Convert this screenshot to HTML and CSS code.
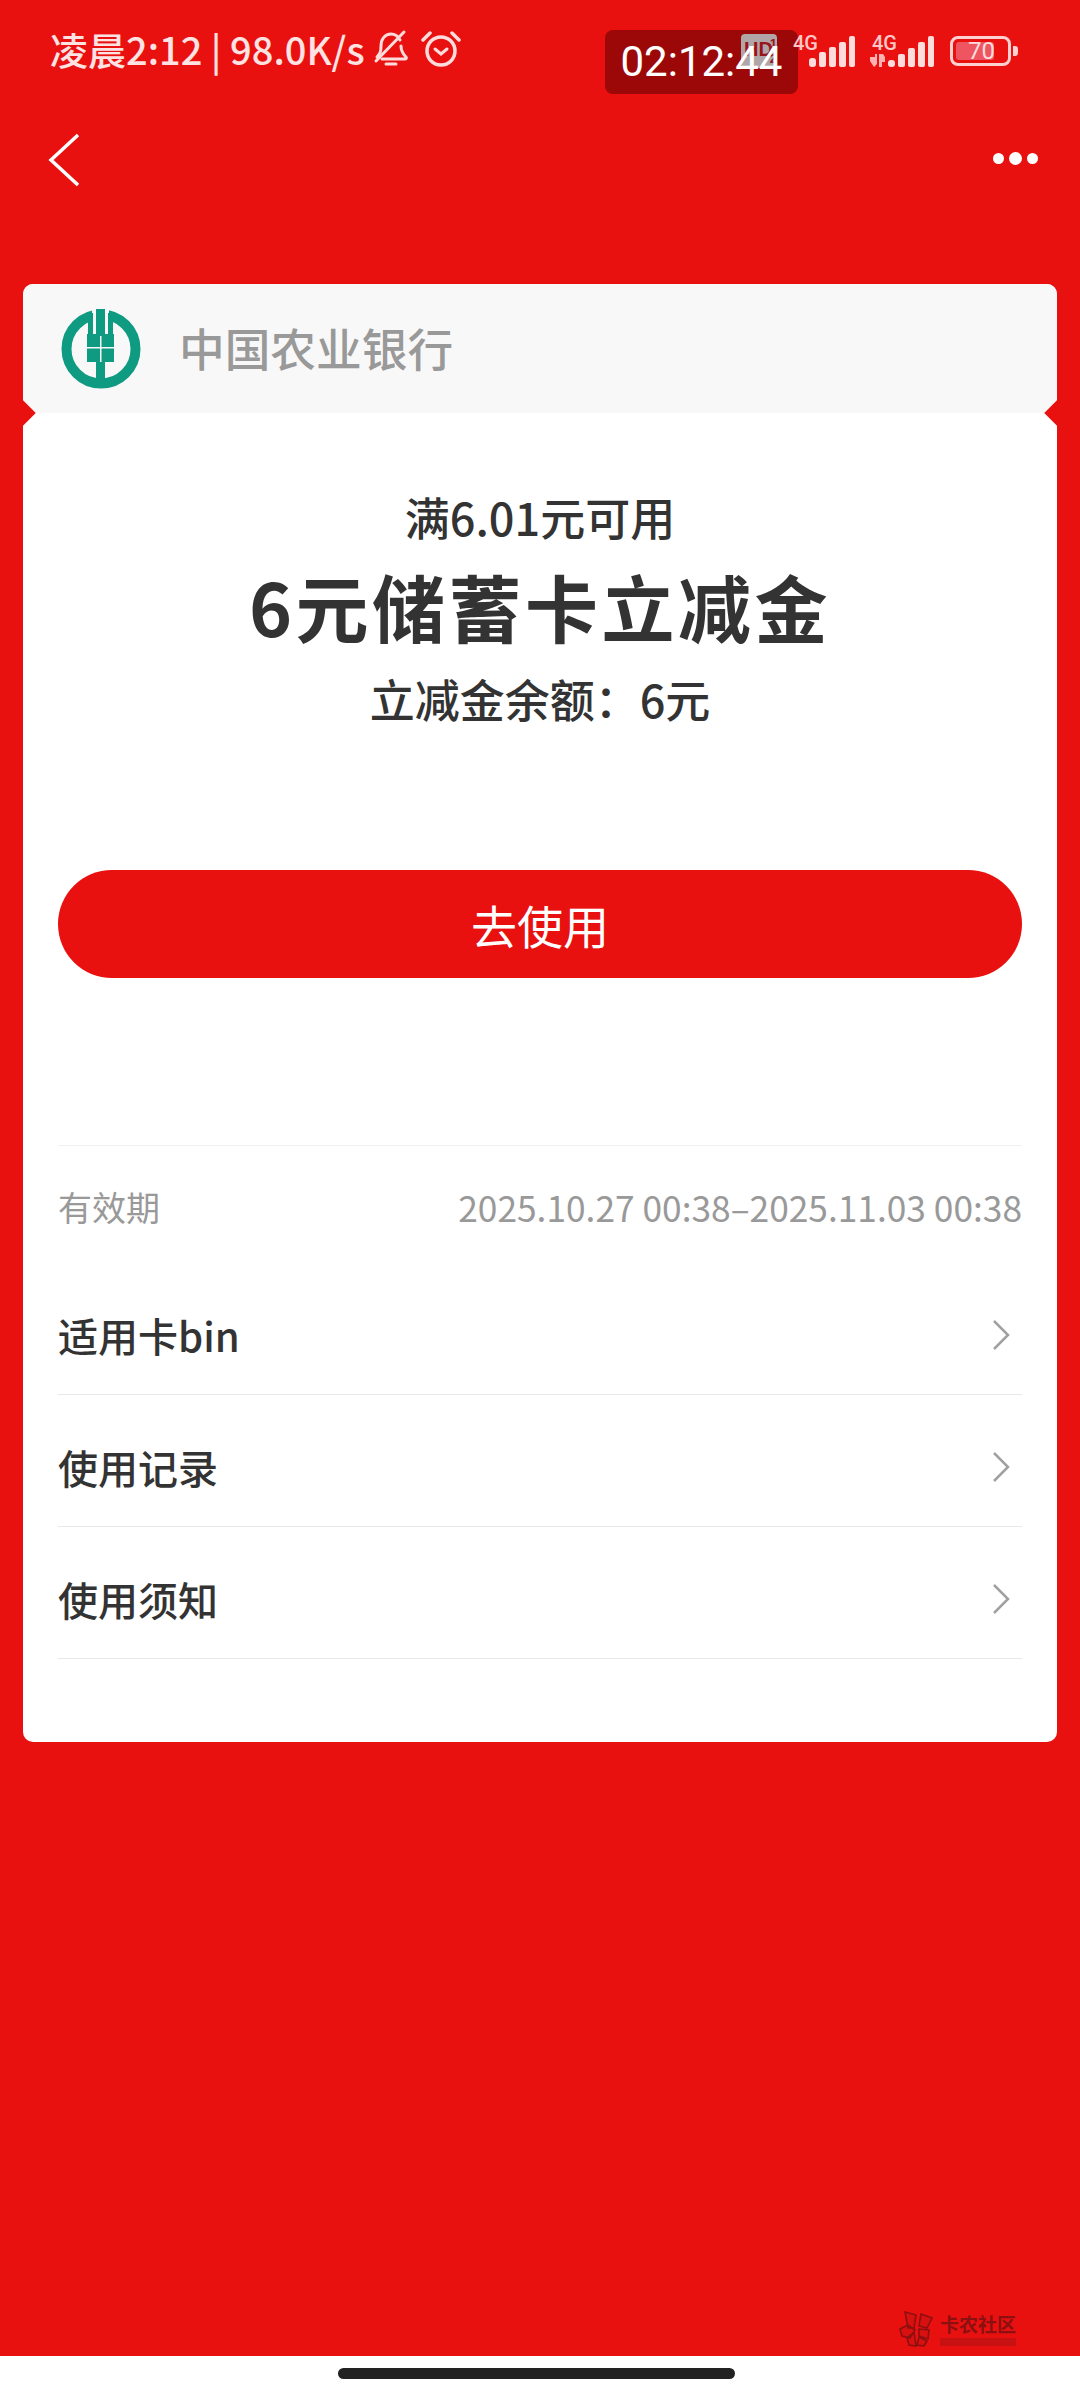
FILE: index.html
```html
<!DOCTYPE html>
<html lang="zh">
<head>
    <meta charset="UTF-8">
    <title>立减金</title>
    <link rel="stylesheet" href="styles.css">
</head>
<body>
    <div id="page">
        <div class="status">
            <div class="timer"></div>
            <div class="status-left">
                <span class="status-text">凌晨2:12 | 98.0K/s</span>
                <svg class="ico-bell" width="36" height="40" viewBox="0 0 36 40">
                    <path d="M4 28c3-3 4-5 4-11 0-7 4-12 10-12 4 0 7 2 9 6M28 17c0 5 2 8 5 11 1 1 0 2-1 2H9" fill="none" stroke="#ffdcdc" stroke-width="3" stroke-linecap="round"/>
                    <path d="M3 32L31 3" stroke="#ffdcdc" stroke-width="3" stroke-linecap="round"/>
                    <path d="M13 35h10" stroke="#ffdcdc" stroke-width="3" stroke-linecap="round"/>
                </svg>
                <svg class="ico-alarm" width="40" height="38" viewBox="0 0 40 38">
                    <circle cx="20" cy="21" r="14" fill="none" stroke="#ffdcdc" stroke-width="3.5"/>
                    <path d="M14 19l6 5 6-5" fill="none" stroke="#ffdcdc" stroke-width="3" stroke-linecap="round"/>
                    <path d="M2 10L9 3M38 10L31 3" stroke="#ffdcdc" stroke-width="3.5" stroke-linecap="round"/>
                </svg>
            </div>
            <div class="status-right">
                <div class="hd">HD<span class="hd-num">1<br>2</span></div>
                <svg class="sig" width="62" height="36" viewBox="0 0 62 36">
                    <text x="0" y="16" class="sig-label">4G</text>
                    <rect x="16" y="24" width="7" height="9" rx="3" fill="#ffdcdc"/>
                    <rect x="26" y="18" width="7" height="15" rx="2" fill="#ffdcdc"/>
                    <rect x="36" y="13" width="7" height="20" rx="2" fill="#ffdcdc"/>
                    <rect x="46" y="8" width="7" height="25" rx="2" fill="#ffdcdc"/>
                    <rect x="56" y="2" width="6" height="31" rx="2" fill="#ffdcdc"/>
                </svg>
                <svg class="sig" width="65" height="36" viewBox="0 0 65 36">
                    <text x="2" y="16" class="sig-label">4G</text>
                    <path d="M0 23h5v-3h2v10l-3 3-4-6zM9 33V20h4l2 3v5h-3v5z" fill="#ffb0b0"/>
                    <rect x="18" y="26" width="7" height="7" rx="3" fill="#ffdcdc"/>
                    <rect x="28" y="20" width="7" height="13" rx="2" fill="#ffdcdc"/>
                    <rect x="38" y="14" width="7" height="19" rx="2" fill="#ffdcdc"/>
                    <rect x="48" y="8" width="7" height="25" rx="2" fill="#ffdcdc"/>
                    <rect x="58" y="2" width="6" height="31" rx="2" fill="#ffdcdc"/>
                </svg>
                <div class="battery">
                    <div class="battery-body">
                        <div class="battery-fill"></div>
                        <span class="battery-num">70</span>
                    </div>
                    <div class="battery-nub"></div>
                </div>
            </div>
            <div class="timer-text">02:12:44</div>
        </div>

        <div class="nav">
            <svg width="32" height="54" viewBox="0 0 32 54">
                <path d="M30 2L3 27l27 25" fill="none" stroke="#fff" stroke-width="3.5"/>
            </svg>
            <div class="more">
                <i class="dot"></i><i class="dot dot-mid"></i><i class="dot"></i>
            </div>
        </div>

        <div class="card">
            <div class="card-head">
                <svg class="bank-logo" width="80" height="80" viewBox="0 0 80 80">
                    <circle cx="40" cy="40" r="34.5" fill="none" stroke="#0f9a82" stroke-width="10"/>
                    <rect x="31" y="0" width="17" height="24" fill="#f8f8f8"/>
                    <rect x="27" y="4" width="5" height="22" fill="#0f9a82"/>
                    <rect x="47" y="4" width="5" height="22" fill="#0f9a82"/>
                    <rect x="35" y="0" width="9" height="25" fill="#0f9a82"/>
                    <rect x="26" y="25" width="27" height="28" fill="#0f9a82"/>
                    <rect x="35" y="53" width="9" height="22" fill="#0f9a82"/>
                    <rect x="39" y="27" width="1.5" height="26" fill="#f8f8f8"/>
                    <rect x="26" y="38" width="27" height="1.5" fill="#f8f8f8"/>
                </svg>
                <span class="bank-name">中国农业银行</span>
            </div>
            <div class="card-body">
                <div class="hero">
                    <div class="hero-min">满6.01元可用</div>
                    <div class="hero-title">6元储蓄卡立减金</div>
                    <div class="hero-left">立减金余额：6元</div>
                </div>
                <div class="use-btn">去使用</div>
                <div class="validity">
                    <span class="validity-label">有效期</span>
                    <span class="validity-date">2025.10.27 00:38–2025.11.03 00:38</span>
                </div>
                <div class="row">
                    <span>适用卡bin</span>
                    <svg width="18" height="32" viewBox="0 0 18 32"><path d="M2 2l14 14L2 30" fill="none" stroke="#a0a0a0" stroke-width="2.5"/></svg>
                </div>
                <div class="row">
                    <span>使用记录</span>
                    <svg width="18" height="32" viewBox="0 0 18 32"><path d="M2 2l14 14L2 30" fill="none" stroke="#a0a0a0" stroke-width="2.5"/></svg>
                </div>
                <div class="row">
                    <span>使用须知</span>
                    <svg width="18" height="32" viewBox="0 0 18 32"><path d="M2 2l14 14L2 30" fill="none" stroke="#a0a0a0" stroke-width="2.5"/></svg>
                </div>
            </div>
        </div>

        <div class="watermark">
            <svg width="36" height="36" viewBox="0 0 36 36">
                <path d="M6 1l11 3-2 13-6 0zM22 3l11 4-5 10-8-2zM1 18l8-4 7 5-5 8-8-2zM20 18l10 1-1 9-9-3zM8 27l7-6 2 14-7-1zM20 26l8 4-3 5-7-1z" fill="#d81010" stroke="#8c1010" stroke-width="1.6"/>
            </svg>
            <div class="watermark-text">
                <span>卡农社区</span>
                <i class="watermark-sub"></i>
            </div>
        </div>

        <div class="home-bar"><i class="home-line"></i></div>
    </div>
</body>
</html>
```

FILE: styles.css
```css
*{
    margin: 0;
    padding: 0;
    box-sizing: border-box;
}
body{
    background: #e91010;
    font-family: "Noto Sans CJK SC", "Noto Sans", sans-serif;
}
#page{
    width: 1080px;
    height: 2400px;
    background: #e91010;
    position: relative;
    overflow: hidden;
    display: flex;
    flex-direction: column;
}

/* status bar */
.status{
    height: 100px;
    padding: 27px 0 0 50px;
    display: flex;
    justify-content: space-between;
    align-items: flex-start;
}
.status-left{
    display: flex;
    align-items: center;
    color: #ffe2e2;
}
.status-text{
    font-size: 38px;
    line-height: 44px;
    font-weight: 500;
}
.ico-bell{
    margin-left: 8px;
}
.ico-alarm{
    margin-left: 12px;
}
.status-right{
    display: flex;
    align-items: flex-start;
    padding: 7px 62px 0 0;
    position: relative;
}
.hd{
    width: 36px;
    height: 34px;
    background: #b0a6a8;
    border-radius: 4px;
    color: #99141a;
    font: bold 20px/30px "Liberation Sans", sans-serif;
    padding-left: 3px;
    position: relative;
    white-space: nowrap;
}
.hd-num{
    position: absolute;
    right: 0;
    top: 2px;
    font-size: 13px;
    line-height: 15px;
}
.sig{
    margin-left: 16px;
    overflow: visible;
}
.sig + .sig{
    margin-left: 15px;
}
.sig-label{
    font: 500 20px "Roboto", sans-serif;
    fill: #ffc8c8;
}
.battery{
    margin: 2px 0 0 15px;
    display: flex;
    align-items: center;
}
.battery-body{
    width: 61px;
    height: 30px;
    border: 3px solid #ffd0d0;
    border-radius: 8px;
    position: relative;
}
.battery-fill{
    width: 38px;
    height: 18px;
    margin: 3px 0 0 3px;
    background: #ee5560;
    border-radius: 3px;
}
.battery-num{
    position: absolute;
    left: 15px;
    top: 0;
    font: 24px/24px "Roboto", sans-serif;
    color: #ffdcdc;
}
.battery-nub{
    width: 5px;
    height: 10px;
    margin-left: 2px;
    background: #ffd0d0;
    border-radius: 0 3px 3px 0;
}
.timer,.timer-text{
    position: absolute;
    left: 605px;
    top: 30px;
    width: 193px;
    height: 64px;
}
.timer{
    background: #9c0808;
    border-radius: 8px;
}
.timer-text{
    color: #fff;
    font: 400 42px/64px "Roboto", sans-serif;
    text-align: center;
}

/* nav */
.nav{
    height: 184px;
    padding: 33px 42px 0 48px;
    display: flex;
    justify-content: space-between;
    align-items: flex-start;
}
.more{
    display: flex;
    align-items: center;
    gap: 5px;
    margin-top: 19px;
}
.dot{
    width: 11px;
    height: 11px;
    background: #fff;
    border-radius: 50%;
}
.dot-mid{
    width: 13px;
    height: 13px;
}

/* card */
.card{
    width: 1034px;
    margin-left: 23px;
    background: #fff;
    border-radius: 10px;
    position: relative;
    overflow: hidden;
}
.card:before,.card:after{
    content: "";
    position: absolute;
    top: 120px;
    width: 18px;
    height: 18px;
    background: #e91010;
    transform: rotate(45deg);
}
.card:before{
    left: -9px;
}
.card:after{
    right: -9px;
}
.card-head{
    height: 129px;
    background: #f8f8f8;
    padding-left: 38px;
    display: flex;
    align-items: center;
}
.bank-name{
    margin: 0 0 3px 38px;
    font-size: 45.7px;
    line-height: 60px;
    font-weight: 500;
    color: #999;
}
.card-body{
    padding: 0 35px 83px;
}
.hero{
    padding-top: 74px;
    text-align: center;
    color: #333;
}
.hero-min{
    font-size: 45px;
    line-height: 60px;
    font-weight: 500;
}
.hero-title{
    margin-top: 13px;
    font-size: 73px;
    line-height: 90px;
    font-weight: 700;
    letter-spacing: 3.5px;
}
.hero-left{
    margin-top: 19px;
    font-size: 45px;
    line-height: 60px;
    font-weight: 500;
}
.use-btn{
    margin-top: 141px;
    height: 108px;
    background: #e91010;
    border-radius: 54px;
    color: #fff;
    font-size: 46px;
    line-height: 108px;
    text-align: center;
}
.validity{
    margin-top: 167px;
    border-top: 1px solid #f0f0f0;
    padding: 31px 0 26px;
    display: flex;
    justify-content: space-between;
    font-size: 35.3px;
    line-height: 60px;
    color: #999;
}
.validity-label{
    font-size: 34px;
}
.row{
    height: 132px;
    padding: 42px 12px 30px 0;
    border-bottom: 1px solid #e8e8e8;
    display: flex;
    justify-content: space-between;
    align-items: center;
    font-size: 40px;
    line-height: 60px;
    font-weight: 500;
    color: #333;
}

/* bottom */
.watermark{
    position: absolute;
    left: 899px;
    top: 2311px;
    display: flex;
    align-items: center;
    gap: 5px;
}
.watermark-text{
    display: flex;
    flex-direction: column;
    color: #8c1010;
    font-size: 19px;
    line-height: 24px;
    font-weight: 700;
}
.watermark-sub{
    height: 8px;
    margin-top: 2px;
    background: #c81212;
}
.home-bar{
    position: absolute;
    left: 0;
    bottom: 0;
    width: 1080px;
    height: 44px;
    background: #fff;
    padding: 12px 0 0 338px;
}
.home-line{
    display: block;
    width: 397px;
    height: 11px;
    background: #222;
    border-radius: 6px;
}
```
